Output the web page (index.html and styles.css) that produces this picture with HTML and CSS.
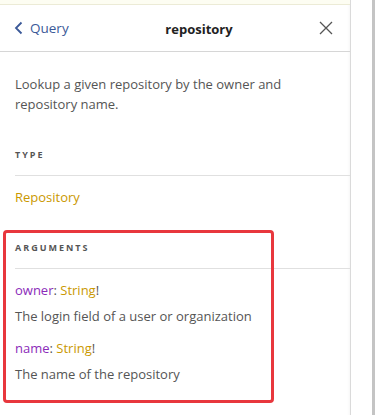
FILE: index.html
```html
<!DOCTYPE html>
<html lang="en">
<head>
  <meta charset="UTF-8" />
  <meta name="viewport" content="width=device-width, initial-scale=1.0"/>
  <title>Documentation Explorer</title>
  <link rel="stylesheet" href="styles.css">
</head>
<body>
  <div id="page">
    <div id="docExplorer">
      <div class="top-strip"></div>

      <div class="doc-header">
        <a class="doc-back" href="#">
          <svg width="10" height="14" viewBox="0 0 10 14"><path d="M7.5 1.5 L2 7 L7.5 12.5" fill="none" stroke="#3b5998" stroke-width="1.8"/></svg>
          Query
        </a>
        <div class="doc-title">repository</div>
        <button class="doc-close" aria-label="Close">
          <svg width="14" height="14" viewBox="0 0 14 14"><path d="M1 1 L13 13 M13 1 L1 13" stroke="#555" stroke-width="1.3" fill="none"/></svg>
        </button>
      </div>

      <div class="doc-content">
        <p class="doc-description">Lookup a given repository by the owner and repository name.</p>

        <div class="doc-section">
          <div class="section-title">type</div>
          <div class="section-body">
            <a class="type-name" href="#">Repository</a>
          </div>
        </div>

        <div class="doc-section">
          <div class="section-title">arguments</div>
          <div class="section-body">
            <div class="arg">
              <span class="arg-name">owner</span>: <span class="type-name">String</span>!
              <div class="arg-description">The login field of a user or organization</div>
            </div>
            <div class="arg">
              <span class="arg-name">name</span>: <span class="type-name">String</span>!
              <div class="arg-description">The name of the repository</div>
            </div>
          </div>
        </div>
      </div>

      <div class="highlight"></div>
    </div>
    <div class="gutter"></div>
    <div class="pane-edge"></div>
  </div>
</body>
</html>
```

FILE: styles.css
```css
body {
  margin: 0;
  padding: 0;
  font-family: 'Open Sans', 'Noto Sans', sans-serif;
  background: #fff;
  color: #555;
}

#page {
  display: flex;
  height: 415px;
  overflow: hidden;
}

#docExplorer {
  position: relative;
  width: 350px;
  border-right: 1px solid #dadada;
  box-shadow: inset -4px 0 3px -3px rgba(0,0,0,0.04);
}

.gutter {
  flex: 1;
}

.pane-edge {
  width: 3px;
  background: #c4c4c4;
}

.top-strip {
  height: 4px;
  background: #fdfdf2;
  border-bottom: 1px solid #ecebd6;
}

.doc-header {
  display: flex;
  align-items: center;
  height: 46px;
  padding: 0 15px 0 14px;
  border-bottom: 1px solid #d6d6d6;
  font-size: 13px;
}

.doc-back {
  display: flex;
  align-items: center;
  gap: 6px;
  color: #3b5998;
  text-decoration: none;
  width: 108px;
  font-size: 13.5px;
}

.doc-title {
  flex: 1;
  text-align: center;
  font-weight: bold;
  color: #222;
  margin-right: 42px;
  padding-top: 1px;
}

.doc-close {
  border: none;
  background: none;
  padding: 0;
  width: 16px;
  height: 16px;
  display: flex;
  align-items: center;
  justify-content: center;
  margin-right: 1px;
}

.doc-content {
  padding: 22px 0 0 15px;
  font-size: 13px;
  line-height: 20px;
}

.doc-description {
  margin: 0 25px 0 0;
  color: #555;
}

.doc-section {
  margin-top: 31px;
}

.section-title {
  text-transform: uppercase;
  font-size: 9px;
  font-weight: bold;
  letter-spacing: 2px;
  color: #555;
  padding-bottom: 10px;
  border-bottom: 1px solid #e0e0e0;
}

.section-body {
  padding-top: 11px;
}

.type-name {
  color: #ca9800;
  text-decoration: none;
}

.arg-name {
  color: #8b2bb9;
}

.arg {
  margin-bottom: 12px;
  color: #555;
}

.arg-description {
  margin-top: 6px;
}

.highlight {
  position: absolute;
  left: 3px;
  top: 230px;
  width: 265px;
  height: 167px;
  border: 3px solid #e8373d;
  border-radius: 4px;
}
```
